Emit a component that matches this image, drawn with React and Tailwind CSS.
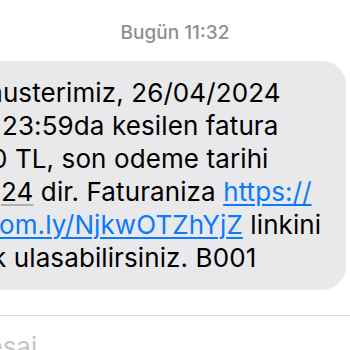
export default function App() {
  const lines = [
    { ml: "ml-[-20px]", parts: [{ t: "musterimiz, 26/04/2024" }] },
    { ml: "ml-[2px]", parts: [{ t: "23:59da kesilen fatura" }] },
    { ml: "ml-[-9px]", parts: [{ t: "0 TL, son odeme tarihi" }] },
    {
      ml: "ml-[1px]",
      parts: [
        { t: "24", kind: "date" },
        { t: " dir. Faturaniza " },
        { t: "https://", kind: "link" },
      ],
    },
    {
      ml: "ml-[-1px]",
      parts: [{ t: "om.ly/NjkwOTZhYjZ", kind: "link" }, { t: " linkini" }],
    },
    { ml: "ml-[-8px]", parts: [{ t: "k ulasabilirsiniz. B001" }] },
  ];

  return (
    <div className="w-[350px] h-[350px] overflow-hidden bg-white font-['Inter',sans-serif]">
      {/* timestamp */}
      <div className="pt-[21px] h-[61px] text-center text-[19px] font-medium text-[#8e8e93] leading-[24px]">
        Bugün 11:32
      </div>

      {/* incoming bubble, left side is cut off */}
      <div className="w-[346px] h-[229px] bg-[#e9e9eb] rounded-r-[24px] pt-[15px] overflow-hidden">
        {lines.map((line, i) => (
          <div
            key={i}
            className={`${line.ml} whitespace-nowrap text-[26px] leading-[33px] text-black tracking-[0.1px]`}
          >
            {line.parts.map((p, j) =>
              p.kind === "link" ? (
                <span
                  key={j}
                  className="text-[#0a7aff] underline decoration-[1.5px] underline-offset-[3px]"
                >
                  {p.t}
                </span>
              ) : p.kind === "date" ? (
                <span
                  key={j}
                  className="underline decoration-[#b0b0b4] decoration-[1.5px] underline-offset-[3px]"
                >
                  {p.t}
                </span>
              ) : (
                <span key={j}>{p.t}</span>
              )
            )}
          </div>
        ))}
      </div>

      {/* message input */}
      <div className="h-[25px]" />
      <div className="h-px bg-[#dcdcdf]" />
      <div className="ml-[-36px] pt-[14px] text-[26px] leading-[33px] text-[#c4c4c8] whitespace-nowrap">
        Mesaj
      </div>
    </div>
  );
}
